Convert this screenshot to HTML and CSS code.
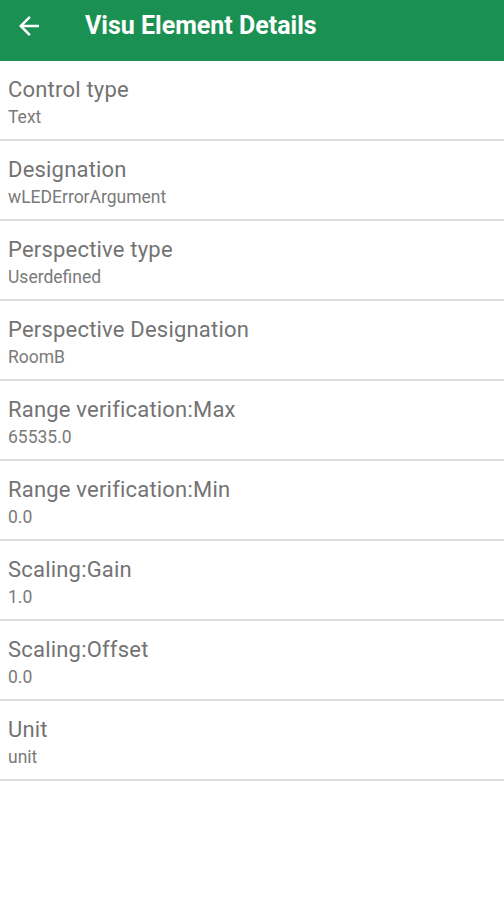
FILE: index.html
```html
<!DOCTYPE html>
<html>
  <head>
    <title>Visu Element Details</title>
    <link rel="stylesheet" href="styles.css">
  </head>
  <body>
    <div class="toolbar">
      <svg class="back" viewBox="0 0 24 24" width="30" height="30">
        <path d="M20 11H7.83l5.59-5.59L12 4l-8 8 8 8 1.41-1.41L7.83 13H20v-2z" fill="#fff"/>
      </svg>
      <h1 class="title">Visu Element Details</h1>
    </div>
    <ul class="details">
      <li><div class="label">Control type</div><div class="value">Text</div></li>
      <li><div class="label">Designation</div><div class="value">wLEDErrorArgument</div></li>
      <li><div class="label">Perspective type</div><div class="value">Userdefined</div></li>
      <li><div class="label">Perspective Designation</div><div class="value">RoomB</div></li>
      <li><div class="label">Range verification:Max</div><div class="value">65535.0</div></li>
      <li><div class="label">Range verification:Min</div><div class="value">0.0</div></li>
      <li><div class="label">Scaling:Gain</div><div class="value">1.0</div></li>
      <li><div class="label">Scaling:Offset</div><div class="value">0.0</div></li>
      <li><div class="label">Unit</div><div class="value">unit</div></li>
    </ul>
  </body>
</html>
```

FILE: styles.css
```css
html,
body {
  margin: 0;
  font-family: Roboto, "Liberation Sans", sans-serif;
  background: #fff;
}
.toolbar {
  display: flex;
  align-items: center;
  height: 61px;
  background-color: #1a9152;
  color: white;
  padding: 0 0 9px 14px;
  box-sizing: border-box;
}
.back {
  display: block;
  flex: none;
}
.title {
  margin: 0 0 0 41px;
  font-size: 25px;
  line-height: 30px;
  font-weight: bold;
}
.details {
  list-style: none;
  margin: 0;
  padding: 0;
}
.details li {
  height: 78px;
  border-bottom: 2px solid #dedede;
  padding: 0 8px;
}
.label {
  padding-top: 16px;
  font-size: 22px;
  line-height: 26px;
  letter-spacing: 0.2px;
  color: #737373;
}
.value {
  margin-top: 4px;
  font-size: 17.5px;
  line-height: 20px;
  color: #7a7a7a;
}
```
